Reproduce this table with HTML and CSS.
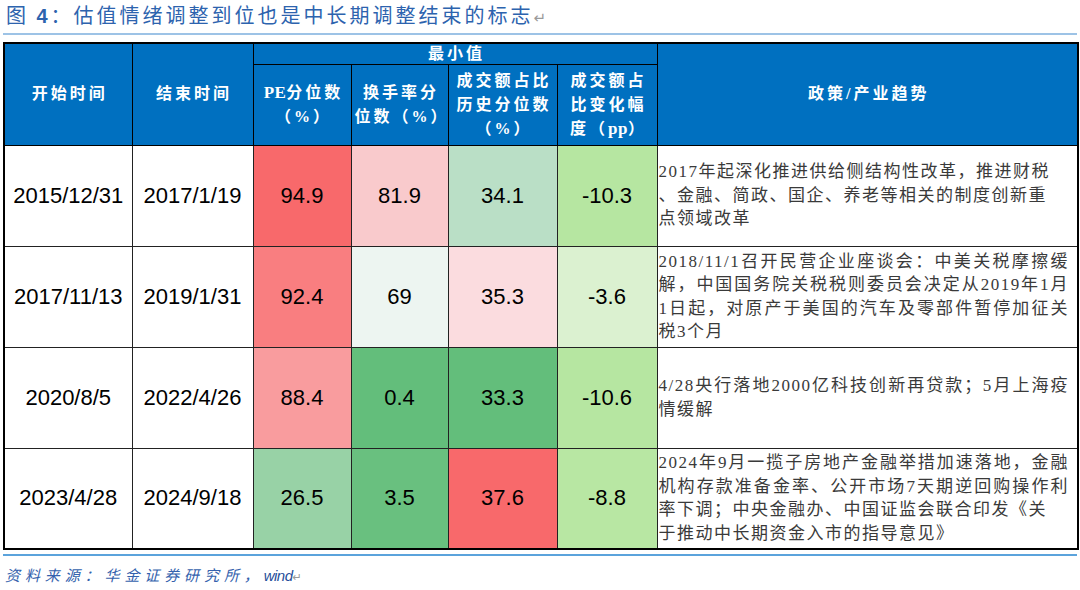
FILE: index.html
```html
<!DOCTYPE html>
<html lang="zh-CN">
<head>
<meta charset="utf-8">
<title>估值情绪调整到位也是中长期调整结束的标志</title>
<link rel="stylesheet" href="styles.css">
</head>
<body>
<div class="page">
  <h1 class="title">图 <b class="fig-no">4</b>：估值情绪调整到位也是中长期调整结束的标志<span class="ret">↵</span></h1>
  <table class="grid">
    <colgroup>
      <col class="w-start"><col class="w-end"><col class="w-pe"><col class="w-turn"><col class="w-share"><col class="w-chg"><col class="w-policy">
    </colgroup>
    <thead>
      <tr class="h1">
        <th rowspan="2">开始时间</th>
        <th rowspan="2">结束时间</th>
        <th colspan="4" class="group">最小值</th>
        <th rowspan="2">政策/产业趋势</th>
      </tr>
      <tr class="h2">
        <th><span class="lat">PE</span>分位数<br>（%）</th>
        <th>换手率分<br>位数（%）</th>
        <th>成交额占比<br>历史分位数<br>（%）</th>
        <th>成交额占<br>比变化幅<br>度（<span class="lat">pp</span>）</th>
      </tr>
    </thead>
    <tbody>
      <tr>
        <td class="num">2015/12/31</td>
        <td class="num">2017/1/19</td>
        <td class="num c-red1">94.9</td>
        <td class="num c-pink1">81.9</td>
        <td class="num c-mint1">34.1</td>
        <td class="num c-lime">-10.3</td>
        <td class="policy">
          <span class="ln">2017年起深化推进供给侧结构性改革，推进财税</span>
          <span class="ln">、金融、简政、国企、养老等相关的制度创新重</span>
          <span class="ln">点领域改革</span>
        </td>
      </tr>
      <tr>
        <td class="num">2017/11/13</td>
        <td class="num">2019/1/31</td>
        <td class="num c-red2">92.4</td>
        <td class="num c-pale">69</td>
        <td class="num c-pink2">35.3</td>
        <td class="num c-lime-pale">-3.6</td>
        <td class="policy">
          <span class="ln j">2018/11/1召开民营企业座谈会：中美关税摩擦缓</span>
          <span class="ln j">解，中国国务院关税税则委员会决定从2019年1月</span>
          <span class="ln j">1日起，对原产于美国的汽车及零部件暂停加征关</span>
          <span class="ln">税3个月</span>
        </td>
      </tr>
      <tr>
        <td class="num">2020/8/5</td>
        <td class="num">2022/4/26</td>
        <td class="num c-red3">88.4</td>
        <td class="num c-green">0.4</td>
        <td class="num c-green">33.3</td>
        <td class="num c-lime">-10.6</td>
        <td class="policy">
          <span class="ln j">4/28央行落地2000亿科技创新再贷款；5月上海疫</span>
          <span class="ln">情缓解</span>
        </td>
      </tr>
      <tr>
        <td class="num">2023/4/28</td>
        <td class="num">2024/9/18</td>
        <td class="num c-mint2">26.5</td>
        <td class="num c-green2">3.5</td>
        <td class="num c-red1">37.6</td>
        <td class="num c-lime2">-8.8</td>
        <td class="policy">
          <span class="ln j">2024年9月一揽子房地产金融举措加速落地，金融</span>
          <span class="ln j">机构存款准备金率、公开市场7天期逆回购操作利</span>
          <span class="ln">率下调；中央金融办、中国证监会联合印发《关</span>
          <span class="ln">于推动中长期资金入市的指导意见》</span>
        </td>
      </tr>
    </tbody>
  </table>
  <p class="src">资料来源：华金证券研究所，<span class="wind">wind</span><span class="ret">↵</span></p>
</div>
</body>
</html>
```

FILE: styles.css
```css
html, body {
  margin: 0;
  padding: 0;
  background: #ffffff;
}

body {
  width: 1080px;
  height: 590px;
  overflow: hidden;
  font-family: "Noto Sans CJK SC", "Liberation Sans", sans-serif;
}

.page {
  padding: 0 3px;
}

.title {
  margin: 0;
  padding-left: 3px;
  height: 33px;
  line-height: 30px;
  font-size: 20px;
  font-weight: 400;
  letter-spacing: 3px;
  color: #2d63ae;
  font-family: "Noto Sans CJK SC", "Liberation Sans", sans-serif;
  border-bottom: 2px solid #9dc3e6;
  white-space: nowrap;
}

.fig-no {
  font-family: "Liberation Sans", sans-serif;
  font-weight: 700;
}

.ret {
  color: #9a9a9a;
  letter-spacing: 0;
  font-family: "DejaVu Sans", sans-serif;
  font-size: 0.75em;
}

.grid {
  margin-top: 7px;
  width: 1074px;
  table-layout: fixed;
  border-collapse: collapse;
  border: 2px solid #000;
}

.w-start { width: 128px; }
.w-end { width: 121px; }
.w-pe { width: 98px; }
.w-turn { width: 97px; }
.w-share { width: 109px; }
.w-chg { width: 100px; }
.w-policy { width: 421px; }

.grid th {
  background: #0070c0;
  color: #ffffff;
  border: 1.5px solid #000;
  font-family: "Liberation Serif", "Noto Sans CJK SC", serif;
  font-size: 16px;
  font-weight: 700;
  line-height: 24px;
  letter-spacing: 3px;
  padding: 0 0 0 3px;
  text-align: center;
  vertical-align: middle;
}

.grid th .lat {
  letter-spacing: 0.5px;
  font-size: 17px;
}

.h1 { height: 21px; }
.h1 .group { line-height: 19px; }
.h2 { height: 81px; }

.grid tbody tr { height: 101px; }

.grid td {
  border: 1px solid #222;
  padding: 0;
  vertical-align: middle;
}

.num {
  font-family: "Liberation Sans", Arial, sans-serif;
  font-size: 22px;
  color: #000;
  text-align: center;
}

.c-red1 { background: #f8696b; }
.c-red2 { background: #f97e80; }
.c-red3 { background: #f99c9e; }
.c-pink1 { background: #f9cacc; }
.c-pink2 { background: #fbdcdf; }
.c-pale { background: #edf5f1; }
.c-mint1 { background: #badfc6; }
.c-mint2 { background: #98d2a6; }
.c-green { background: #63be7b; }
.c-green2 { background: #69c07f; }
.c-lime { background: #b6e6a1; }
.c-lime2 { background: #b8e7a3; }
.c-lime-pale { background: #dbf1d0; }

.policy {
  font-family: "Liberation Serif", "Noto Sans CJK SC", serif;
  font-size: 17px;
  line-height: 23.5px;
  letter-spacing: 1.5px;
  color: #3a3a3a;
  padding: 0 8px 0 1px !important;
  text-align: left;
}

.ln {
  display: block;
  white-space: nowrap;
}

.ln.j {
  text-align: justify;
  text-align-last: justify;
}

.src {
  margin: 4px 0 0;
  border-top: 2px solid #5ba3dc;
  padding: 7px 0 0 2px;
  font-family: "Noto Sans CJK SC", sans-serif;
  font-style: italic;
  font-size: 15px;
  line-height: 24px;
  letter-spacing: 4.9px;
  color: #3462ad;
  white-space: nowrap;
}

.wind {
  font-family: "Liberation Sans", Arial, sans-serif;
  font-size: 15px;
  letter-spacing: -0.5px;
  color: #1f4e9a;
}
```
